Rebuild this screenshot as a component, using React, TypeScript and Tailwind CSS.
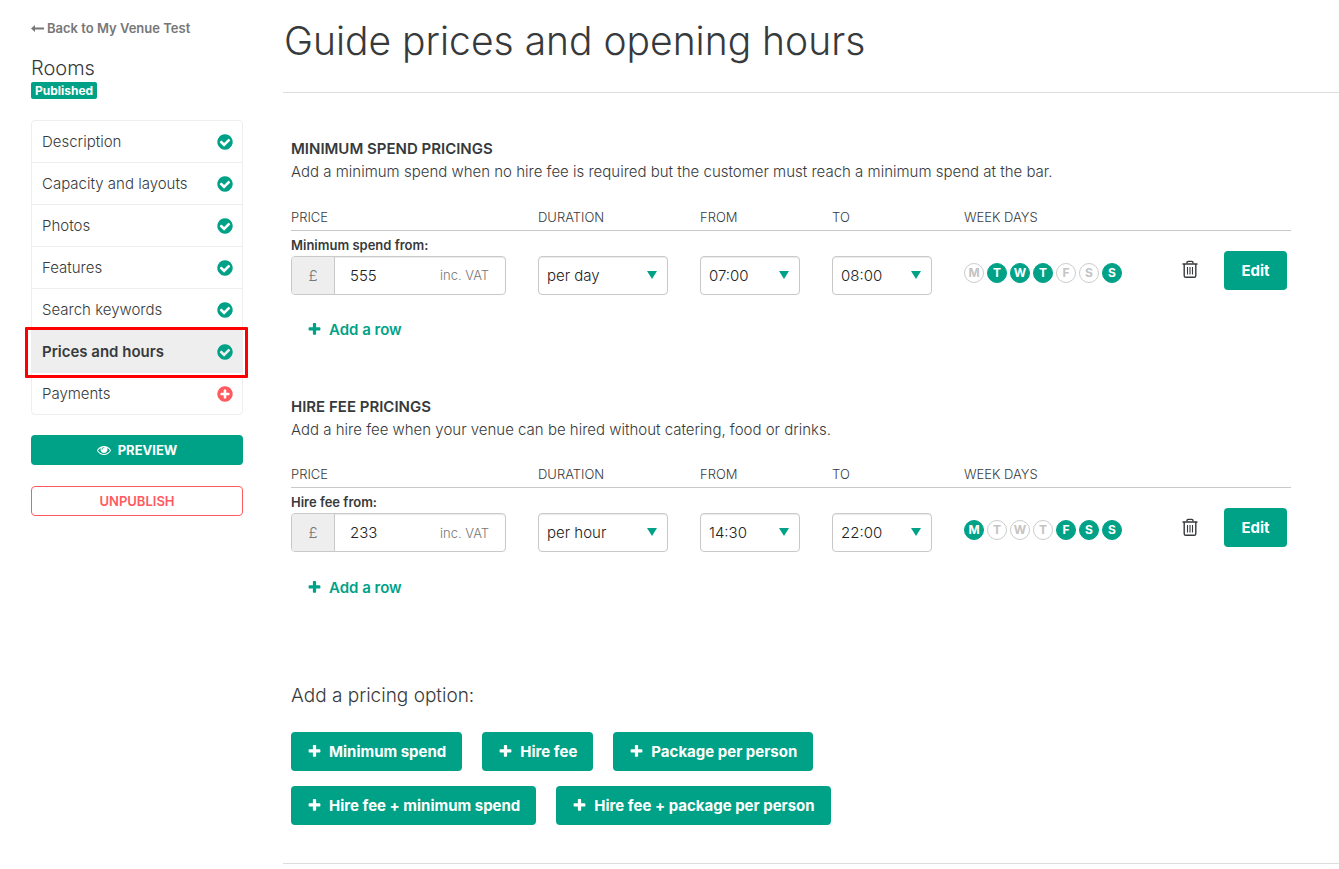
import React from 'react';

const ICONS = {
  check:
    'M1412 734q0-28-18-46l-91-90q-19-19-45-19t-45 19l-408 407-226-226q-19-19-45-19t-45 19l-91 90q-18 18-18 46 0 27 18 45l362 362q19 19 45 19 27 0 46-19l543-543q18-18 18-45zm252 162q0 209-103 385.5t-279.5 279.5-385.5 103-385.5-103-279.5-279.5-103-385.5 103-385.5 279.5-279.5 385.5-103 385.5 103 279.5 279.5 103 385.5z',
  plusCircle:
    'M1344 960v-128q0-26-19-45t-45-19h-256v-256q0-26-19-45t-45-19h-128q-26 0-45 19t-19 45v256h-256q-26 0-45 19t-19 45v128q0 26 19 45t45 19h256v256q0 26 19 45t45 19h128q26 0 45-19t19-45v-256h256q26 0 45-19t19-45zm320-64q0 209-103 385.5t-279.5 279.5-385.5 103-385.5-103-279.5-279.5-103-385.5 103-385.5 279.5-279.5 385.5-103 385.5 103 279.5 279.5 103 385.5z',
  plus: 'M1600 736v192q0 40-28 68t-68 28h-416v416q0 40-28 68t-68 28h-192q-40 0-68-28t-28-68v-416h-416q-40 0-68-28t-28-68v-192q0-40 28-68t68-28h416v-416q0-40 28-68t68-28h192q40 0 68 28t28 68v416h416q40 0 68 28t28 68z',
  eye: 'M1664 960q-152-236-381-353 61 104 61 225 0 185-131.5 316.5t-316.5 131.5-316.5-131.5-131.5-316.5q0-121 61-225-229 117-381 353 133 205 333.5 326.5t434.5 121.5 434.5-121.5 333.5-326.5zm-720-384q0-20-14-34t-34-14q-125 0-214.5 89.5t-89.5 214.5q0 20 14 34t34 14 34-14 14-34q0-86 61-147t147-61q20 0 34-14t14-34zm848 384q0 34-20 69-140 230-376.5 368.5t-499.5 138.5-499.5-139-376.5-368q-20-35-20-69t20-69q140-229 376.5-368t499.5-139 499.5 139 376.5 368q20 35 20 69z',
};

const Icon: React.FC<{ name: keyof typeof ICONS; className: string }> = ({ name, className }) => (
  <svg viewBox="0 0 1792 1792" fill="currentColor" className={className} aria-hidden="true">
    <path d={ICONS[name]} />
  </svg>
);

const NAV_ITEMS = [
  { label: 'Description', done: true },
  { label: 'Capacity and layouts', done: true },
  { label: 'Photos', done: true },
  { label: 'Features', done: true },
  { label: 'Search keywords', done: true },
  { label: 'Prices and hours', done: true, active: true },
  { label: 'Payments', done: false },
];

const DAYS = [
  { letter: 'M', name: 'Monday' },
  { letter: 'T', name: 'Tuesday' },
  { letter: 'W', name: 'Wednesday' },
  { letter: 'T', name: 'Thursday' },
  { letter: 'F', name: 'Friday' },
  { letter: 'S', name: 'Saturday' },
  { letter: 'S', name: 'Sunday' },
];

const OPTION_ROWS = [
  ['Minimum spend', 'Hire fee', 'Package per person'],
  ['Hire fee + minimum spend', 'Hire fee + package per person'],
];

const SelectBox: React.FC<{ label: string; value: string; options: string[]; className: string }> = ({
  label,
  value,
  options,
  className,
}) => (
  <div className={`relative ${className}`}>
    <select
      aria-label={label}
      defaultValue={value}
      className="h-[39px] w-full appearance-none rounded border border-[#c9c9c9] bg-white px-2 pt-0.5 text-[15px] text-[#222] shadow-[inset_0_1px_1px_rgba(0,0,0,0.08)]"
    >
      {options.map((o) => (
        <option key={o}>{o}</option>
      ))}
    </select>
    <svg viewBox="0 0 10 8" className="pointer-events-none absolute top-[15px] right-[11px] h-2 w-[10px]" aria-hidden="true">
      <path d="M0 0h10L5 8z" fill="#00a287" />
    </svg>
  </div>
);

const TrashIcon = () => (
  <svg viewBox="0 0 16 18" fill="none" stroke="#373a3c" className="h-[18px] w-4" aria-hidden="true">
    <path d="M0.5 4h15" strokeWidth="1.5" />
    <path d="M5 3.6V2.6q0-1.2 1.2-1.2h3.6Q11 1.4 11 2.6v1" strokeWidth="1.4" />
    <path d="M2.2 4v11.7q0 1.6 1.6 1.6h8.4q1.6 0 1.6-1.6V4" strokeWidth="1.4" />
    <path d="M5.5 7v7.5M8 7v7.5M10.5 7v7.5" strokeWidth="1.1" />
  </svg>
);

interface PricingSectionProps {
  id: string;
  title: string;
  description: string;
  priceLabel: string;
  price: string;
  duration: string;
  from: string;
  to: string;
  activeDays: number[];
}

const PricingSection: React.FC<PricingSectionProps> = ({
  id,
  title,
  description,
  priceLabel,
  price,
  duration,
  from,
  to,
  activeDays,
}) => (
  <section>
    <h2 className="text-[15px] leading-6 font-semibold">{title}</h2>
    <p className="text-[15px] leading-[22px]">{description}</p>

    <table className="mt-[23px] w-full table-fixed border-collapse text-left">
      <thead>
        <tr className="h-6 border-b border-[#c9c9c9] text-[13px] leading-5">
          <th className="w-[247px] pb-0.5 font-light">PRICE</th>
          <th className="w-[162px] pb-0.5 font-light">DURATION</th>
          <th className="w-[132px] pb-0.5 font-light">FROM</th>
          <th className="w-[132px] pb-0.5 font-light">TO</th>
          <th className="pb-0.5 font-light">WEEK DAYS</th>
          <th className="w-[109px]" />
        </tr>
      </thead>
      <tbody>
        <tr className="align-bottom">
          <td className="pt-1">
            <label htmlFor={id} className="block text-[13px] leading-[21px] font-semibold">
              {priceLabel}
            </label>
            <div className="flex h-[39px] w-[215px] items-stretch overflow-hidden rounded border border-[#c9c9c9] shadow-[inset_0_1px_1px_rgba(0,0,0,0.08)]">
              <span className="flex w-[43px] items-center justify-center border-r border-[#c9c9c9] bg-[#eee] pt-0.5 text-[15px] text-[#777]">
                £
              </span>
              <input id={id} defaultValue={price} className="w-[90px] pt-0.5 pl-[15px] text-[15px] text-[#222]" />
              <span className="flex flex-1 items-center pt-0.5 pl-[15px] text-[13px] text-[#777]">inc. VAT</span>
            </div>
          </td>
          <td>
            <SelectBox label="Duration" value={duration} options={['per hour', 'per day']} className="w-[130px]" />
          </td>
          <td>
            <SelectBox label="From" value={from} options={['07:00', '14:30']} className="w-[100px]" />
          </td>
          <td>
            <SelectBox label="To" value={to} options={['08:00', '22:00']} className="w-[100px]" />
          </td>
          <td className="pb-3">
            <div className="flex gap-[3px]">
              {DAYS.map((day, i) => (
                <label key={day.name} className="relative">
                  <input
                    type="checkbox"
                    aria-label={day.name}
                    defaultChecked={activeDays.includes(i)}
                    className="peer sr-only"
                  />
                  <span className="flex h-5 w-5 items-center justify-center rounded-full border border-[#ccc] text-[12px] font-bold text-[#c4c4c4] peer-checked:border-[#00a287] peer-checked:bg-[#00a287] peer-checked:text-white">
                    {day.letter}
                  </span>
                </label>
              ))}
            </div>
          </td>
          <td className="pb-[5px]">
            <div className="flex items-center gap-[26px]">
              <button aria-label="Delete row" className="pb-0.5">
                <TrashIcon />
              </button>
              <button className="h-[39px] w-[63px] rounded bg-[#00a287] pt-0.5 text-[15px] font-bold text-white">
                Edit
              </button>
            </div>
          </td>
        </tr>
      </tbody>
    </table>

    <button className="mt-6 ml-4 flex h-[22px] items-center gap-[7px] text-[15px] font-semibold text-[#00a287]">
      <Icon name="plus" className="h-[15px] w-[15px]" />
      <span className="pt-0.5">Add a row</span>
    </button>
  </section>
);

export default function App() {
  return (
    <div className="flex min-h-screen bg-white font-['Inter','Liberation_Sans',sans-serif] font-light text-[#373a3c]">
      <aside className="ml-[31px] w-[212px] shrink-0 pt-[18px]">
        <a href="#" className="flex items-center gap-[3px] text-[13px] leading-5 font-semibold text-[#777]">
          <svg viewBox="0 0 13 7" className="h-[7px] w-[13px]" aria-hidden="true">
            <path d="M0 3.5 4 0v2.6h9v1.8H4V7z" fill="currentColor" />
          </svg>
          Back to My Venue Test
        </a>
        <h3 className="mt-[18px] text-[20px] leading-6">Rooms</h3>
        <span className="mt-[2px] block h-[17px] w-[66px] rounded-[2px] bg-[#00a287] text-center text-[12px] leading-[17px] font-bold text-white">
          Published
        </span>

        <nav className="mt-[21px]">
          <ul className="rounded border border-[#eee]">
            {NAV_ITEMS.map((item) => (
              <li key={item.label} className="relative border-b border-[#eee] last:border-b-0">
                <a
                  href="#"
                  className={`flex h-[41px] items-center justify-between pr-2 pl-[10px] text-[15px] ${
                    item.active ? 'bg-[#eee] font-semibold' : ''
                  }`}
                >
                  <span className="pt-0.5">{item.label}</span>
                  {item.done ? (
                    <Icon name="check" className="h-[18px] w-[18px] text-[#00a287]" />
                  ) : (
                    <Icon name="plusCircle" className="h-[18px] w-[18px] text-[#ff5a5f]" />
                  )}
                </a>
                {item.active && (
                  <div className="pointer-events-none absolute -top-1 -right-[6px] -bottom-[6px] -left-[7px] z-10 rounded-[1px] border-3 border-[#ff0000]" />
                )}
              </li>
            ))}
          </ul>
        </nav>

        <button className="mt-5 flex h-[30px] w-full items-center justify-center gap-[7px] rounded bg-[#00a287] text-[13px] font-bold text-white">
          <Icon name="eye" className="h-[14px] w-[14px]" />
          <span className="pt-0.5">PREVIEW</span>
        </button>
        <button className="mt-[21px] h-[30px] w-full rounded border border-[#ff5a5f] pt-0.5 text-[13px] font-semibold text-[#ff5a5f]">
          UNPUBLISH
        </button>
      </aside>

      <main className="ml-10 min-w-0 flex-1">
        <h1 className="h-[93px] border-b border-[#ddd] pt-[17px] pl-px text-[39px] leading-[48px] font-light">
          Guide prices and opening hours
        </h1>

        <div className="pt-11 pr-12 pl-2">
          <PricingSection
            id="minimum-spend"
            title="MINIMUM SPEND PRICINGS"
            description="Add a minimum spend when no hire fee is required but the customer must reach a minimum spend at the bar."
            priceLabel="Minimum spend from:"
            price="555"
            duration="per day"
            from="07:00"
            to="08:00"
            activeDays={[1, 2, 3, 6]}
          />
          <div className="mt-[54px]">
            <PricingSection
              id="hire-fee"
              title="HIRE FEE PRICINGS"
              description="Add a hire fee when your venue can be hired without catering, food or drinks."
              priceLabel="Hire fee from:"
              price="233"
              duration="per hour"
              from="14:30"
              to="22:00"
              activeDays={[0, 4, 5, 6]}
            />
          </div>

          <h2 className="mt-[86px] text-[19px] leading-6">Add a pricing option:</h2>
          <div className="mt-6 flex flex-col gap-[15px]">
            {OPTION_ROWS.map((row) => (
              <div key={row[0]} className="flex gap-5">
                {row.map((option) => (
                  <button
                    key={option}
                    className="flex h-[39px] items-center gap-[7px] rounded bg-[#00a287] px-4 text-[15px] font-bold text-white"
                  >
                    <Icon name="plus" className="h-[15px] w-[15px]" />
                    <span className="pt-0.5">{option}</span>
                  </button>
                ))}
              </div>
            ))}
          </div>
        </div>
        <hr className="mt-[38px] border-[#ddd]" />
      </main>
    </div>
  );
}
